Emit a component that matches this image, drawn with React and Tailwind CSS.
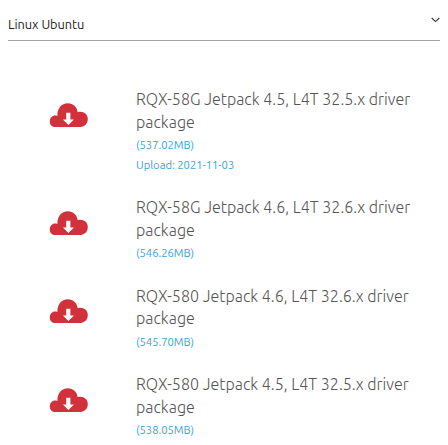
const drivers = [
  { id: 1, first: "RQX-58G Jetpack 4.5, L4T 32.5.x driver", size: "(537.02MB)", upload: "Upload: 2021-11-03" },
  { id: 2, first: "RQX-58G Jetpack 4.6, L4T 32.6.x driver", size: "(546.26MB)" },
  { id: 3, first: "RQX-580 Jetpack 4.6, L4T 32.6.x driver", size: "(545.70MB)" },
  { id: 4, first: "RQX-580 Jetpack 4.5, L4T 32.5.x driver", size: "(538.05MB)" },
];

function CloudDownload() {
  return (
    <svg className="mt-[14.85px] h-6 w-[39px] shrink-0" viewBox="0 0 39 24">
      <path
        fill="#d0313b"
        d="M6.4 24C3 24 0.8 21.6 0.8 18.4C0.8 15.3 3.1 12.6 6.1 12.6C6.9 12.6 7.7 12.7 8.4 13C8 5.5 12.5 0.2 18.9 0.2C24 0.2 28 3.9 28.7 9.2C34.3 7.8 38.8 11 38.8 16.1C38.8 20.6 35.6 24 31.4 24Z"
      />
      <path fill="#fff" d="M17.2 9.8h4.2v6.6h3.5L19.4 22L13.9 16.4H17.2Z" />
    </svg>
  );
}

export default function App() {
  return (
    <div className="h-[445px] w-[448px] overflow-hidden bg-white pl-2 font-['Ubuntu','Open_Sans','Noto_Sans',sans-serif]">
      <div className="flex h-[41px] w-[432px] justify-between border-b border-[#a3a3a3]">
        <span className="mt-[15px] text-[12.8px] leading-[18px] tracking-[-0.04px] text-[#222]">Linux Ubuntu</span>
        <svg className="mt-[17px] h-[6px] w-[9px]" viewBox="0 0 9 6" fill="none" stroke="#333" strokeWidth="1.1">
          <path d="M0.7 1L4.5 4.6L8.3 1" />
        </svg>
      </div>
      <ul className="flex flex-col gap-[21.25px] pt-[46.75px] pl-[41px]">
        {drivers.map((d) => (
          <li key={d.id} className="flex gap-12">
            <CloudDownload />
            <div className="whitespace-nowrap text-[11.2px] leading-5 text-[#34a4dc]">
              <h3 className="mb-[1.35px] text-base leading-[22.9px] font-light tracking-[0.03px] text-[#555]">
                {d.first}
                <br />
                package
              </h3>
              <p>{d.size}</p>
              {d.upload && <p>{d.upload}</p>}
            </div>
          </li>
        ))}
      </ul>
    </div>
  );
}
